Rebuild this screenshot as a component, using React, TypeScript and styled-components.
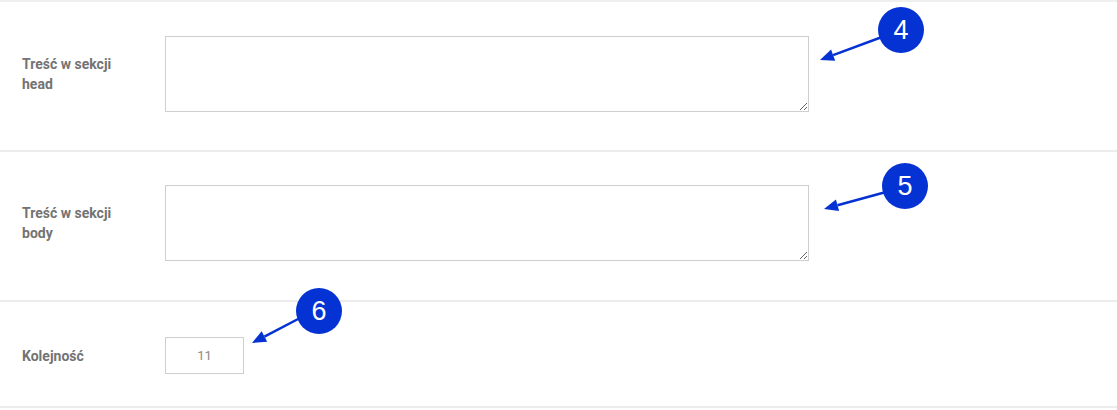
import * as React from 'react';
import styled, { createGlobalStyle } from 'styled-components';

const GlobalStyle = createGlobalStyle`
    html, body {
        margin: 0;
        padding: 0;
        background: #ffffff;
        font-family: Roboto, "Liberation Sans", Arial, sans-serif;
    }
`;

const Page = styled.div`
    position: relative;
    width: 1117px;
    height: 410px;
    overflow: hidden;
    border-top: 2px solid #efefef;
    box-sizing: border-box;
`;

const Row = styled.div<{ $top: number; $bottom: number }>`
    display: flex;
    align-items: center;
    padding-top: ${p => p.$top}px;
    padding-bottom: ${p => p.$bottom}px;
    border-bottom: 2px solid #ececec;
`;

const Label = styled.div`
    width: 165px;
    flex-shrink: 0;
    box-sizing: border-box;
    padding-left: 22px;
    padding-right: 30px;
    font-size: 14px;
    line-height: 20px;
    font-weight: 700;
    color: #737373;
`;

const TextArea = styled.textarea`
    width: 644px;
    height: 76px;
    box-sizing: border-box;
    margin: 0;
    border: 1px solid #cfcfcf;
    border-radius: 0;
    outline: none;
    resize: both;
    font-family: inherit;
`;

const NumberInput = styled.input`
    width: 79px;
    height: 37px;
    box-sizing: border-box;
    margin: 0;
    border: 1px solid #cfcfcf;
    border-radius: 0;
    text-align: center;
    font-family: inherit;
    font-size: 13px;
    color: #8a8a8a;
    outline: none;
`;

const Badge = styled.div<{ $x: number; $y: number }>`
    position: absolute;
    left: ${p => p.$x - 23}px;
    top: ${p => p.$y - 23}px;
    width: 46px;
    height: 46px;
    border-radius: 50%;
    background: #0532d2;
    color: #ffffff;
    display: flex;
    align-items: center;
    justify-content: center;
    font-family: "Liberation Sans", Arial, sans-serif;
    font-size: 27px;
    line-height: 1;
`;

const Overlay = styled.svg`
    position: absolute;
    left: 0;
    top: 0;
    pointer-events: none;
`;

type ArrowProps = { x1: number, y1: number, x2: number, y2: number };

const Arrow = ({ x1, y1, x2, y2 }: ArrowProps) => {
    const ang = Math.atan2(y2 - y1, x2 - x1);
    const len = 14;
    const w = 6;
    const bx = x2 - Math.cos(ang) * len;
    const by = y2 - Math.sin(ang) * len;
    const px = -Math.sin(ang) * w;
    const py = Math.cos(ang) * w;
    return (
        <g>
            <line x1={x1} y1={y1} x2={bx} y2={by} stroke="#0532d2" strokeWidth={2.5} />
            <polygon points={`${x2},${y2} ${bx + px},${by + py} ${bx - px},${by - py}`} fill="#0532d2" />
        </g>
    );
};

export default function App() {
    return (
        <>
            <GlobalStyle />
            <Page>
                <Row $top={34} $bottom={38}>
                    <Label>Treść w sekcji head</Label>
                    <TextArea />
                </Row>
                <Row $top={33} $bottom={39}>
                    <Label>Treść w sekcji body</Label>
                    <TextArea />
                </Row>
                <Row $top={35} $bottom={32}>
                    <Label>Kolejność</Label>
                    <NumberInput defaultValue="11" />
                </Row>

                <Overlay width={1117} height={410}>
                    <Arrow x1={882} y1={35} x2={820} y2={58} />
                    <Arrow x1={886} y1={190} x2={824} y2={207} />
                    <Arrow x1={300} y1={316} x2={252} y2={341} />
                </Overlay>
                <Badge $x={901} $y={28}>4</Badge>
                <Badge $x={905} $y={184}>5</Badge>
                <Badge $x={319} $y={309}>6</Badge>
            </Page>
        </>
    );
}
